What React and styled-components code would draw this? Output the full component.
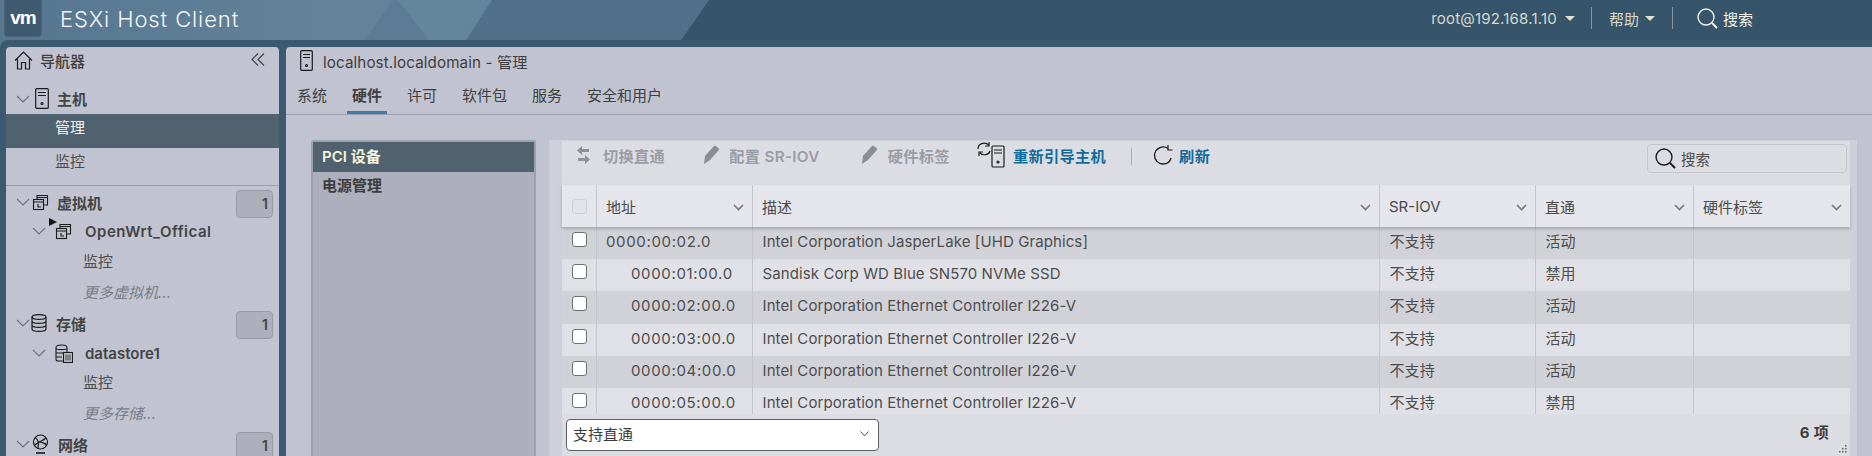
import React from "react";
import styled, { createGlobalStyle } from "styled-components";

const Global = createGlobalStyle`
  html, body { margin: 0; padding: 0; height: 456px; overflow: hidden; background: #587890; }
  * { box-sizing: border-box; }
  body { font-family: Inter, "Noto Sans CJK SC", sans-serif; font-size: 15px; color: #4a4a4a; }
`;

const Page = styled.div`width: 1872px; height: 456px; display: flex; flex-direction: column; overflow: hidden;`;

const Header = styled.header`
  position: relative; height: 40px; flex: none; display: flex; align-items: center; overflow: hidden;
  background: linear-gradient(90deg, #567690 0%, #64839a 330px, #64839a 400px);
`;
const HeaderArt = styled.svg`position: absolute; left: 0; top: 0; width: 1872px; height: 40px;`;
const Logo = styled.div`
  position: relative; width: 38px; height: 37px; margin: 0 0 3px 4px; flex: none; background: #3f596e;
  border: 1px solid #4c6579; border-top: 0; border-radius: 0 0 4px 4px; color: #fff; font: 700 19px/35px "Liberation Sans", sans-serif;
  letter-spacing: -1px; text-align: center;
`;
const AppTitle = styled.div`
  position: relative; margin-left: 18px; margin-bottom: 3px; color: #f4f5f6; font-size: 22px; font-weight: 300; letter-spacing: 0.9px; white-space: nowrap;
`;
const HeaderRight = styled.div`
  position: relative; margin-left: auto; margin-right: 119px; display: flex; align-items: center; color: #d9d8cc; font-size: 15px; height: 40px;
`;
const HeaderSep = styled.span`width: 1px; height: 22px; background: #8498a8; margin: 0 ${p => p.$r}px 4px ${p => p.$l}px;`;
const HeaderItem = styled.span`display: flex; align-items: center; margin-bottom: 4px; white-space: nowrap; letter-spacing: ${p => p.$ls || 0}px;`;
const Caret = styled.span`
  width: 0; height: 0; margin-left: ${p => p.$gap}px; border-left: 5px solid transparent; border-right: 5px solid transparent; border-top: 5px solid #e2e0d2;
`;
const HeaderSearch = styled.span`display: flex; align-items: center; gap: 5px; color: #f6f4e6; font-size: 15px; margin-bottom: 4px;`;

const Workspace = styled.div`
  flex: 1; min-height: 0; display: flex; gap: 7px; padding: 7px 0 0 6px; background: #3b5a70; border-top-left-radius: 8px;
`;

const Nav = styled.nav`width: 273px; flex: none; background: #c1c4d0; border-radius: 4px 4px 0 0; overflow: hidden;`;
const NavHead = styled.div`height: 30px; display: flex; align-items: center; padding: 0 14px 3px 8px; color: #3e3e3e; font-weight: 500;`;
const NavHeadText = styled.span`margin-left: 7px;`;
const Collapse = styled.svg`margin-left: auto; margin-bottom: 3px;`;

const TreeRow = styled.div`
  height: ${p => p.$h}px; margin-top: ${p => p.$mt || 0}px; padding: 0 6px ${p => p.$pb || 0}px ${p => p.$pl}px;
  display: flex; align-items: center; color: #444; font-weight: 600; letter-spacing: ${p => p.$ls || 0}px; white-space: nowrap;
`;
const TreeIcon = styled.span`position: relative; display: flex; margin: 0 ${p => p.$gap}px 0 ${p => p.$left}px;`;
const Flag = styled.span`
  position: absolute; left: -6px; top: -5px; width: 0; height: 0; border-top: 4px solid transparent; border-bottom: 4px solid transparent; border-left: 8px solid #111;
`;
const Badge = styled.span`
  margin-left: auto; margin-top: 4px; width: 37px; height: 28px; padding-right: 4px; background: #adb0bc; border: 1px solid #949aa6; border-radius: 4px;
  color: #444; text-align: right; font-size: 14px; font-weight: 600; line-height: 26px; letter-spacing: 0;
`;
const NavLink = styled.div`
  height: ${p => p.$h}px; padding: ${p => p.$pt || 0}px 0 0 ${p => p.$pl}px; line-height: 27px; background: ${p => p.$active ? "#50616f" : "transparent"};
  color: ${p => p.$active ? "#f2f1e6" : p.$muted ? "#7a7c84" : "#4c4c4c"}; font-style: ${p => p.$muted ? "italic" : "normal"};
  border-bottom: ${p => p.$rule ? "1px solid #9a9ea9" : "0"}; white-space: nowrap;
`;
const MoreLink = styled(NavLink)`line-height: ${p => p.$h}px;`;

const Main = styled.main`flex: 1; min-width: 0; background: #c1c4d0; border-radius: 4px 0 0 0; display: flex; flex-direction: column; overflow: hidden;`;
const TitleRow = styled.div`height: 30px; flex: none; display: flex; align-items: center; gap: 10px; padding: 0 0 3px 14px; color: #3e3e3e; font-size: 15.2px; letter-spacing: .1px;`;
const Tabs = styled.div`height: 38px; flex: none; display: flex; gap: 15px; padding-left: 6px; border-bottom: 1px solid #9a9fad;`;
const Tab = styled.div`
  height: 37px; padding: 11px 5px 0; line-height: 15px; color: #3f3f3f; font-weight: ${p => p.$active ? 600 : 400};
  border-bottom: 3px solid ${p => p.$active ? "#3d7ba8" : "transparent"}; white-space: nowrap; font-size: 15px;
`;
const Content = styled.div`flex: 1; min-height: 0; display: flex; gap: 13px; padding: 25px 15px 0 25px;`;
const SubList = styled.div`width: 225px; flex: none; background: #adb0bc; border: 2px solid #9da1ae; border-bottom: 0; border-radius: 3px 3px 0 0;`;
const SubItem = styled.div`
  height: ${p => p.$h}px; padding-left: 9px; line-height: ${p => p.$h}px; font-weight: 600;
  background: ${p => p.$active ? "#50616f" : "transparent"}; color: ${p => p.$active ? "#f6f3dc" : "#3d3d3d"};
`;
const Strip = styled.div`flex: 1; min-width: 0; background: #cdd0da; padding: 1px 7px 0 13px; display: flex;`;
const Panel = styled.section`flex: 1; min-width: 0; background: #dcdde3; display: flex; flex-direction: column;`;
const Toolbar = styled.div`height: 44px; flex: none; display: flex; align-items: flex-start; padding: 0 3px 0 15px;`;
const ToolBtn = styled.span`
  display: flex; align-items: center; height: 27px; gap: ${p => p.$gap}px; margin-right: ${p => p.$mr}px; white-space: nowrap;
  color: ${p => p.$on ? "#0f6c9d" : "#9a9ca4"}; font-weight: 600; font-size: 15.2px; letter-spacing: .35px;
`;
const ToolSep = styled.span`width: 1px; height: 17px; margin: 7px 21px 0 0; background: #a9abb2;`;
const SearchBox = styled.div`
  margin-left: auto; margin-top: 3px; width: 200px; height: 29px; display: flex; align-items: center; gap: 5px; padding-left: 7px;
  border: 1px solid #c3c5cc; border-radius: 4px; color: #4b4b4b; font-size: 14.5px;
`;
const grid = "35px 156px 627px 156px 158px 156px";
const HeadRow = styled.div`
  height: 42px; flex: none; display: grid; grid-template-columns: ${grid}; background: #e5e6eb; box-shadow: 0 2px 3px rgba(90,90,100,.35); position: relative; z-index: 1;
`;
const HeadCell = styled.div`
  display: flex; align-items: center; padding: 0 8px 0 9px; border-right: 1px solid #c5c7ce; color: #4a4a4a; font-size: 15px; white-space: nowrap;
  &:last-child { border-right: 0; }
`;
const HeadChevron = styled.svg`margin-left: auto; margin-top: 2px;`;
const Body = styled.div`flex: 1; min-height: 0; overflow: hidden; background: #e0e1e6;`;
const Row = styled.div`
  height: 32.2px; display: grid; grid-template-columns: ${grid}; background: ${p => p.$odd ? "#d1d2d8" : "#e0e1e6"};
`;
const Cell = styled.div`
  padding: 0 9px; padding-left: 9.5px; border-right: 1px solid #c2c4ca; line-height: 30px; color: #4d4d4d; font-size: 15px; letter-spacing: .1px; white-space: nowrap;
  &:last-child { border-right: 0; }
`;
const AddressCell = styled(Cell)`padding-left: ${p => p.$pl}px; letter-spacing: .65px;`;
const CheckCell = styled.div`padding: 5px 0 0 10px; border-right: 1px solid #c2c4ca;`;
const HeadCheckCell = styled.div`display: flex; align-items: center; padding-left: 10px; border-right: 1px solid #c5c7ce;`;
const Check = styled.span`
  display: block; width: 15px; height: 15px; background: ${p => p.$faint ? "#e3e4e9" : "#fff"}; border: 1px solid ${p => p.$faint ? "#cdd0d6" : "#6f7177"}; border-radius: 3px;
`;
const Footer = styled.div`height: 42px; flex: none; position: relative; display: flex; align-items: center; padding: 0 21px 0 4px; background: #dcdde2; justify-content: space-between;`;
const SelectBox = styled.div`
  width: 313px; height: 32px; display: flex; align-items: center; justify-content: space-between; padding: 0 9px 3px 6px; background: #fff; border: 1px solid #5d5f63; border-radius: 4px; color: #3c3c3c; font-size: 15px;
`;
const Count = styled.span`margin-bottom: 7px; color: #3d3d3d; font-weight: 700; font-size: 15px; letter-spacing: .3px;`;
const Grip = styled.svg`position: absolute; right: 3px; bottom: 3px;`;

const Svg = ({ w, h, children, c = "#1b1b1b", sw = 1.2, ...r }) => (
  <svg width={w} height={h} viewBox={`0 0 ${w} ${h}`} fill="none" stroke={c} strokeWidth={sw} {...r}>{children}</svg>
);
const Chevron = ({ w = 14, c = "#6d7078" }) => (
  <Svg w={w} h={8} c={c} sw={1.1}><path d={`M1 1 L${w / 2} 7 L${w - 1} 1`} /></Svg>
);
const Host = () => (
  <Svg w={14} h={21}><rect x=".7" y=".7" width="12.6" height="19.6" rx="1" /><path d="M3 4.5H11M3 7.5H11" /><circle cx="7" cy="15.5" r="1" /></Svg>
);
const Home = () => (
  <Svg w={19} h={19}><path d="M1 9.5 L9.5 1 L18 9.5M3.5 8V18H7.5V11.5H11.5V18H15.5V8" /></Svg>
);
const Vm = () => (
  <Svg w={17} h={17} sw={1.1}><path d="M5 5V1.5H15.5V11H11.5" /><path d="M5 3.5H15.5" /><rect x="1.5" y="5.5" width="10" height="10" /><path d="M1.5 8H11.5M6 10V13H9" /></Svg>
);
const Db = () => (
  <Svg w={16} h={18}><ellipse cx="8" cy="3" rx="7" ry="2.4" /><path d="M1 3V15C1 16.3 4 17.4 8 17.4S15 16.3 15 15V3M1 7C1 8.3 4 9.4 8 9.4S15 8.3 15 7M1 11C1 12.3 4 13.4 8 13.4S15 12.3 15 11" /></Svg>
);
const Datastore = () => (
  <Svg w={18} h={19} sw={1.1}><path d="M8 17H3C1.8 17 1 16.4 1 15V3.5C1 1.7 4 1 6.5 1S12 1.7 12 3.5V8M1 4.5C2 6 11 6 12 4.5M1 9H8M1 13H7" /><rect x="8.5" y="8.5" width="9" height="10" /><path d="M11 10.5V16.5M13 10.5V16.5M15 10.5V16.5" strokeWidth=".8" /></Svg>
);
const Globe = () => (
  <Svg w={17} h={20}><circle cx="8.5" cy="8" r="7" /><path d="M3 4C6 5 7 9 6 14M14 4C11 7 7 7 3 11M7 8C10 8 14 10 14.5 11" /><path d="M4 19H13" strokeWidth="1.6" /></Svg>
);
const Search = ({ c, s = 21 }) => (
  <Svg w={s} h={s} c={c} sw={1.4}><circle cx={s * .43} cy={s * .43} r={s * .38} /><path d={`M${s * .71} ${s * .71}L${s - 1} ${s - 1}`} strokeWidth="2" /></Svg>
);
const Pen = () => (
  <svg width="18" height="20" viewBox="0 0 18 20"><path d="M1 19 L2 11 L10 2 L12 0.5 L16.5 4 L15 6 L7 15 Z" fill="#8b8d93" /></svg>
);
const Swap = () => (
  <svg width="13" height="18" viewBox="0 0 13 18" fill="#8f9197"><path d="M5 0 L5 3 L12 3 L12 6 L5 6 L5 9 L0 4.5 Z" /><path d="M8 9 L8 12 L1 12 L1 15 L8 15 L8 18 L13 13.5 Z" /></svg>
);
const Reload = () => (
  <Svg w={28} h={28} c="#1b1b1b" sw={1.2}>
    <path d="M1 8C1 3 7 0 12 4M12 1V5H8M13 10C12 14 6 15 3 12M2 15V11H6" />
    <rect x="15" y="5" width="12" height="21" rx="1" /><path d="M17 9H25M17 12H25" /><circle cx="21" cy="21" r="1" />
  </Svg>
);
const Refresh = () => (
  <Svg w={20} h={20} c="#1b1b1b" sw={1.3}><path d="M15 3.5C10 0 2 3 1.5 10C1.5 15 5 19 10 19C14 19 17 17 18 13" /><path d="M15 0V5H19.5" strokeWidth="1.2" /></Svg>
);

const rows = [
  ["0000:00:02.0", "Intel Corporation JasperLake [UHD Graphics]", "活动", 9],
  ["0000:01:00.0", "Sandisk Corp WD Blue SN570 NVMe SSD", "禁用", 34],
  ["0000:02:00.0", "Intel Corporation Ethernet Controller I226-V", "活动", 34],
  ["0000:03:00.0", "Intel Corporation Ethernet Controller I226-V", "活动", 34],
  ["0000:04:00.0", "Intel Corporation Ethernet Controller I226-V", "活动", 34],
  ["0000:05:00.0", "Intel Corporation Ethernet Controller I226-V", "禁用", 34],
];
const heads = ["地址", "描述", "SR-IOV", "直通", "硬件标签"];
const tabs = ["系统", "硬件", "许可", "软件包", "服务", "安全和用户"];

export default function App() {
  return (
    <Page>
      <Global />
      <Header>
        <HeaderArt viewBox="0 0 1872 40">
          <polygon points="393,0 365,40 429,40 398,0" fill="#5d7b94" />
          <polygon points="398,0 492,0 466,40 429,40" fill="#64869d" />
          <polygon points="492,0 709,0 681,40 466,40" fill="#527089" />
          <polygon points="709,0 1872,0 1872,40 681,40" fill="#36556b" />
        </HeaderArt>
        <Logo>vm</Logo>
        <AppTitle>ESXi Host Client</AppTitle>
        <HeaderRight>
          <HeaderItem $ls={.2}>root@192.168.1.10<Caret $gap={8} /></HeaderItem>
          <HeaderSep $l={16} $r={17} />
          <HeaderItem>帮助<Caret $gap={6} /></HeaderItem>
          <HeaderSep $l={17} $r={24} />
          <HeaderSearch><Search c="#f2f2ea" />搜索</HeaderSearch>
        </HeaderRight>
      </Header>
      <Workspace>
        <Nav>
          <NavHead>
            <Home />
            <NavHeadText>导航器</NavHeadText>
            <Collapse width="14" height="13" viewBox="0 0 14 13" fill="none" stroke="#3c3c3c" strokeWidth="1.1"><path d="M7 .5L1 6.5L7 12.5M13 .5L7 6.5L13 12.5" /></Collapse>
          </NavHead>
          <TreeRow $h={29} $mt={8} $pl={10} $pb={2}>
            <Chevron /><TreeIcon $left={5} $gap={8}><Host /></TreeIcon>主机
          </TreeRow>
          <NavLink $h={34} $pl={49} $active>管理</NavLink>
          <NavLink $h={38} $pl={49} $rule>监控</NavLink>
          <TreeRow $h={28} $mt={4} $pl={10} $pb={4}>
            <Chevron /><TreeIcon $left={2} $gap={8}><Vm /></TreeIcon>虚拟机<Badge>1</Badge>
          </TreeRow>
          <TreeRow $h={28} $pl={26} $pb={2} $ls={.5}>
            <Chevron /><TreeIcon $left={9} $gap={13}><Flag /><Vm /></TreeIcon>OpenWrt_Offical
          </TreeRow>
          <NavLink $h={30} $pt={2} $pl={77}>监控</NavLink>
          <MoreLink $h={34} $pl={77} $muted>更多虚拟机...</MoreLink>
          <TreeRow $h={30} $pl={10} $pb={4}>
            <Chevron /><TreeIcon $left={1} $gap={9}><Db /></TreeIcon>存储<Badge>1</Badge>
          </TreeRow>
          <TreeRow $h={26} $pl={26}>
            <Chevron /><TreeIcon $left={9} $gap={12}><Datastore /></TreeIcon>datastore1
          </TreeRow>
          <NavLink $h={32} $pt={3} $pl={77}>监控</NavLink>
          <MoreLink $h={32} $pl={77} $muted>更多存储...</MoreLink>
          <TreeRow $h={32} $pl={10} $pb={4}>
            <Chevron /><TreeIcon $left={2} $gap={9}><Globe /></TreeIcon>网络<Badge>1</Badge>
          </TreeRow>
        </Nav>
        <Main>
          <TitleRow><Svg w={13} h={21}><rect x=".7" y=".7" width="11.6" height="19.6" rx="1" /><path d="M3 4.5H10M3 7.5H10" /><circle cx="6.5" cy="15.5" r="1" /></Svg>localhost.localdomain - 管理</TitleRow>
          <Tabs>{tabs.map((t, i) => <Tab key={t} $active={i === 1}>{t}</Tab>)}</Tabs>
          <Content>
            <SubList>
              <SubItem $h={30} $active>PCI 设备</SubItem>
              <SubItem $h={28}>电源管理</SubItem>
            </SubList>
            <Strip>
              <Panel>
                <Toolbar>
                  <ToolBtn $gap={13} $mr={38}><Swap />切换直通</ToolBtn>
                  <ToolBtn $gap={8} $mr={41}><Pen />配置 SR-IOV</ToolBtn>
                  <ToolBtn $gap={9} $mr={27}><Pen />硬件标签</ToolBtn>
                  <ToolBtn $gap={8} $mr={25} $on><Reload />重新引导主机</ToolBtn>
                  <ToolSep />
                  <ToolBtn $gap={6} $mr={0} $on><Refresh />刷新</ToolBtn>
                  <SearchBox><Search c="#1b1b1b" />搜索</SearchBox>
                </Toolbar>
                <HeadRow>
                  <HeadCheckCell><Check $faint /></HeadCheckCell>
                  {heads.map(h => (
                    <HeadCell key={h}>{h}<HeadChevron width="11" height="7" viewBox="0 0 11 7" fill="none" stroke="#777" strokeWidth="1.6"><path d="M1 1L5.5 5.5L10 1" /></HeadChevron></HeadCell>
                  ))}
                </HeadRow>
                <Body>
                  {rows.map((r, i) => (
                    <Row key={r[0]} $odd={i % 2 === 0}>
                      <CheckCell><Check /></CheckCell>
                      <AddressCell $pl={r[3]}>{r[0]}</AddressCell>
                      <Cell>{r[1]}</Cell>
                      <Cell>不支持</Cell>
                      <Cell>{r[2]}</Cell>
                      <Cell />
                    </Row>
                  ))}
                </Body>
                <Footer>
                  <SelectBox>支持直通<Svg w={9} h={6} c="#555" sw={1}><path d="M.5 .5L4.5 5L8.5 .5" /></Svg></SelectBox>
                  <Count>6 项</Count>
                  <Grip width="9" height="8" viewBox="0 0 9 8" fill="#666"><rect x="7" y="0" width="1.5" height="1.5" /><rect x="4" y="3" width="1.5" height="1.5" /><rect x="7" y="3" width="1.5" height="1.5" /><rect x="1" y="6" width="1.5" height="1.5" /><rect x="4" y="6" width="1.5" height="1.5" /><rect x="7" y="6" width="1.5" height="1.5" /></Grip>
                </Footer>
              </Panel>
            </Strip>
          </Content>
        </Main>
      </Workspace>
    </Page>
  );
}
